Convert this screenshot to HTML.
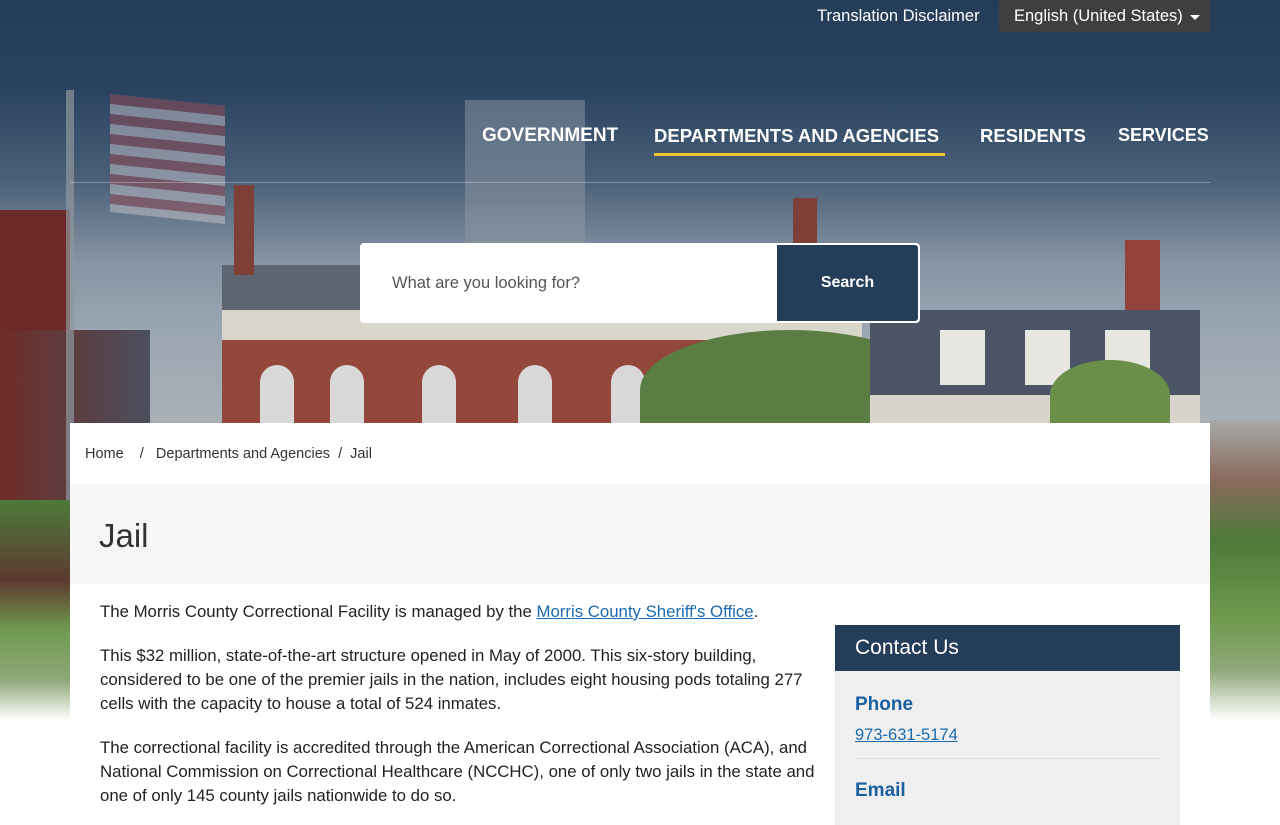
<!DOCTYPE html>
<html><head><meta charset="utf-8"><style>
*{margin:0;padding:0;box-sizing:border-box}
body{width:1280px;height:800px;overflow:hidden;position:relative;font-family:"Liberation Sans",sans-serif;background:#fff;color:#222}
.a{position:absolute}
#hero{left:0;top:0;width:1280px;height:720px;background:linear-gradient(#243d58 0px,#2a4360 90px,#4a6078 180px,#8593a3 260px,#9aa6b2 330px,#a8b0b6 420px);overflow:hidden}
.nav{top:125px;color:#fff;font-weight:bold;font-size:18.5px}
</style></head><body>
<div id="hero" class="a">
 <div class="a" style="left:0;top:210px;width:70px;height:420px;background:#6b2a25"></div>
 <div class="a" style="left:0;top:330px;width:150px;height:300px;background:linear-gradient(90deg,#6e2c26,#4b4f5e)"></div>
 <div class="a" style="left:66px;top:90px;width:8px;height:560px;background:#8e979f;opacity:.7"></div>
 <div class="a" style="left:110px;top:100px;width:115px;height:118px;background:repeating-linear-gradient(#9a4a56 0 10px,#c9c6cc 10px 20px);transform:skewY(6deg);opacity:.5"></div>
 <div class="a" style="left:465px;top:100px;width:120px;height:145px;background:#8d98a4;opacity:.5"></div>
 <div class="a" style="left:222px;top:265px;width:150px;height:50px;background:#5e6470"></div>
 <div class="a" style="left:234px;top:185px;width:20px;height:90px;background:#7e3f36"></div>
 <div class="a" style="left:793px;top:198px;width:24px;height:80px;background:#7e3f36"></div>
 <div class="a" style="left:222px;top:310px;width:640px;height:30px;background:#d9d6cc"></div>
 <div class="a" style="left:222px;top:340px;width:640px;height:90px;background:#93473a"></div>
 <div class="a" style="left:260px;top:365px;width:34px;height:60px;background:#d8d8d8;border-radius:17px 17px 0 0"></div>
 <div class="a" style="left:330px;top:365px;width:34px;height:60px;background:#d8d8d8;border-radius:17px 17px 0 0"></div>
 <div class="a" style="left:422px;top:365px;width:34px;height:60px;background:#d8d8d8;border-radius:17px 17px 0 0"></div>
 <div class="a" style="left:518px;top:365px;width:34px;height:60px;background:#d8d8d8;border-radius:17px 17px 0 0"></div>
 <div class="a" style="left:611px;top:365px;width:34px;height:60px;background:#d8d8d8;border-radius:17px 17px 0 0"></div>
 <div class="a" style="left:640px;top:330px;width:300px;height:120px;background:#5a7d44;border-radius:50% 50% 0 0"></div>
 <div class="a" style="left:1125px;top:240px;width:35px;height:100px;background:#93423a"></div>
 <div class="a" style="left:870px;top:310px;width:330px;height:90px;background:#4c5566"></div>
 <div class="a" style="left:870px;top:395px;width:330px;height:30px;background:#d8d4cc"></div>
 <div class="a" style="left:940px;top:330px;width:45px;height:55px;background:#e8e6e0"></div>
 <div class="a" style="left:1025px;top:330px;width:45px;height:55px;background:#e8e6e0"></div>
 <div class="a" style="left:1105px;top:330px;width:45px;height:55px;background:#e8e6e0"></div>
 <div class="a" style="left:1050px;top:360px;width:120px;height:70px;background:#6a8f48;border-radius:50% 50% 0 0"></div>
 <div class="a" style="left:1210px;top:420px;width:70px;height:300px;background:linear-gradient(#a7a9a8 0,#8a6a5c 60px,#4d7a3a 120px,#6f9a4e 200px,#8fa87a 250px,#ffffff 300px)"></div>
 <div class="a" style="left:0;top:500px;width:70px;height:220px;background:linear-gradient(#4d7a3a 0,#5d3a30 80px,#6f9a4e 130px,#8fa87a 180px,#ffffff 220px)"></div>
</div>

<div class="a" style="left:817px;top:7px;color:#fff;font-size:16.5px">Translation Disclaimer</div>
<div class="a" style="left:999px;top:0;width:211px;height:32px;background:#3f3f42;color:#fff;font-size:16.5px;padding:7px 0 0 15px">English (United States)
 <span class="a" style="left:191px;top:15px;width:0;height:0;border-left:5px solid transparent;border-right:5px solid transparent;border-top:5px solid #fff"></span></div>

<div class="a nav" style="left:482px;font-size:19px">GOVERNMENT</div>
<div class="a nav" style="left:654px">DEPARTMENTS AND AGENCIES</div>
<div class="a" style="left:654px;top:153px;width:291px;height:3px;background:#f0c330"></div>
<div class="a nav" style="left:980px">RESIDENTS</div>
<div class="a nav" style="left:1118px;font-size:18px">SERVICES</div>
<div class="a" style="left:70px;top:182px;width:1140px;height:1px;background:rgba(255,255,255,.3)"></div>

<div class="a" style="left:360px;top:243px;width:560px;height:80px;background:#fff;border-radius:4px"></div>
<div class="a" style="left:392px;top:274px;color:#555;font-size:16.5px">What are you looking for?</div>
<div class="a" style="left:777px;top:245px;width:141px;height:76px;background:#243d58;color:#fff;font-weight:bold;font-size:16px;text-align:center;line-height:76px;border-radius:0 3px 3px 0">Search</div>

<div class="a" style="left:70px;top:423px;width:1140px;height:400px;background:#fff"></div>
<div class="a" style="left:85px;top:446px;font-size:14.5px;color:#333">Home &nbsp;&nbsp; / &nbsp;&nbsp;Departments and Agencies &nbsp;/ &nbsp;Jail</div>
<div class="a" style="left:70px;top:484px;width:1140px;height:100px;background:#f7f7f7"></div>
<div class="a" style="left:99px;top:517px;font-size:33px;color:#333">Jail</div>

<div class="a" style="left:100px;top:600px;width:730px;font-size:16.8px;line-height:24px;color:#222">
<p>The Morris County Correctional Facility is managed by the <a style="color:#1a6bb0;text-decoration:underline">Morris County Sheriff's Office</a>.</p>
<p style="margin-top:20px">This $32 million, state-of-the-art structure opened in May of 2000. This six-story building,<br>considered to be one of the premier jails in the nation, includes eight housing pods totaling 277<br>cells with the capacity to house a total of 524 inmates.</p>
<p style="margin-top:20px">The correctional facility is accredited through the American Correctional Association (ACA), and<br>National Commission on Correctional Healthcare (NCCHC), one of only two jails in the state and<br>one of only 145 county jails nationwide to do so.</p>
</div>

<div class="a" style="left:835px;top:625px;width:345px;height:200px;background:#efefef"></div>
<div class="a" style="left:835px;top:625px;width:345px;height:46px;background:#243d58;color:#fff;font-size:21px;padding:11px 0 0 20px">Contact Us</div>
<div class="a" style="left:855px;top:694px;color:#1a5fa0;font-weight:bold;font-size:19px">Phone</div>
<div class="a" style="left:855px;top:726px;color:#1a6bb0;font-size:16.5px;text-decoration:underline">973-631-5174</div>
<div class="a" style="left:855px;top:758px;width:305px;height:1px;background:#ddd"></div>
<div class="a" style="left:855px;top:780px;color:#1a5fa0;font-weight:bold;font-size:19px">Email</div>
</body></html>
